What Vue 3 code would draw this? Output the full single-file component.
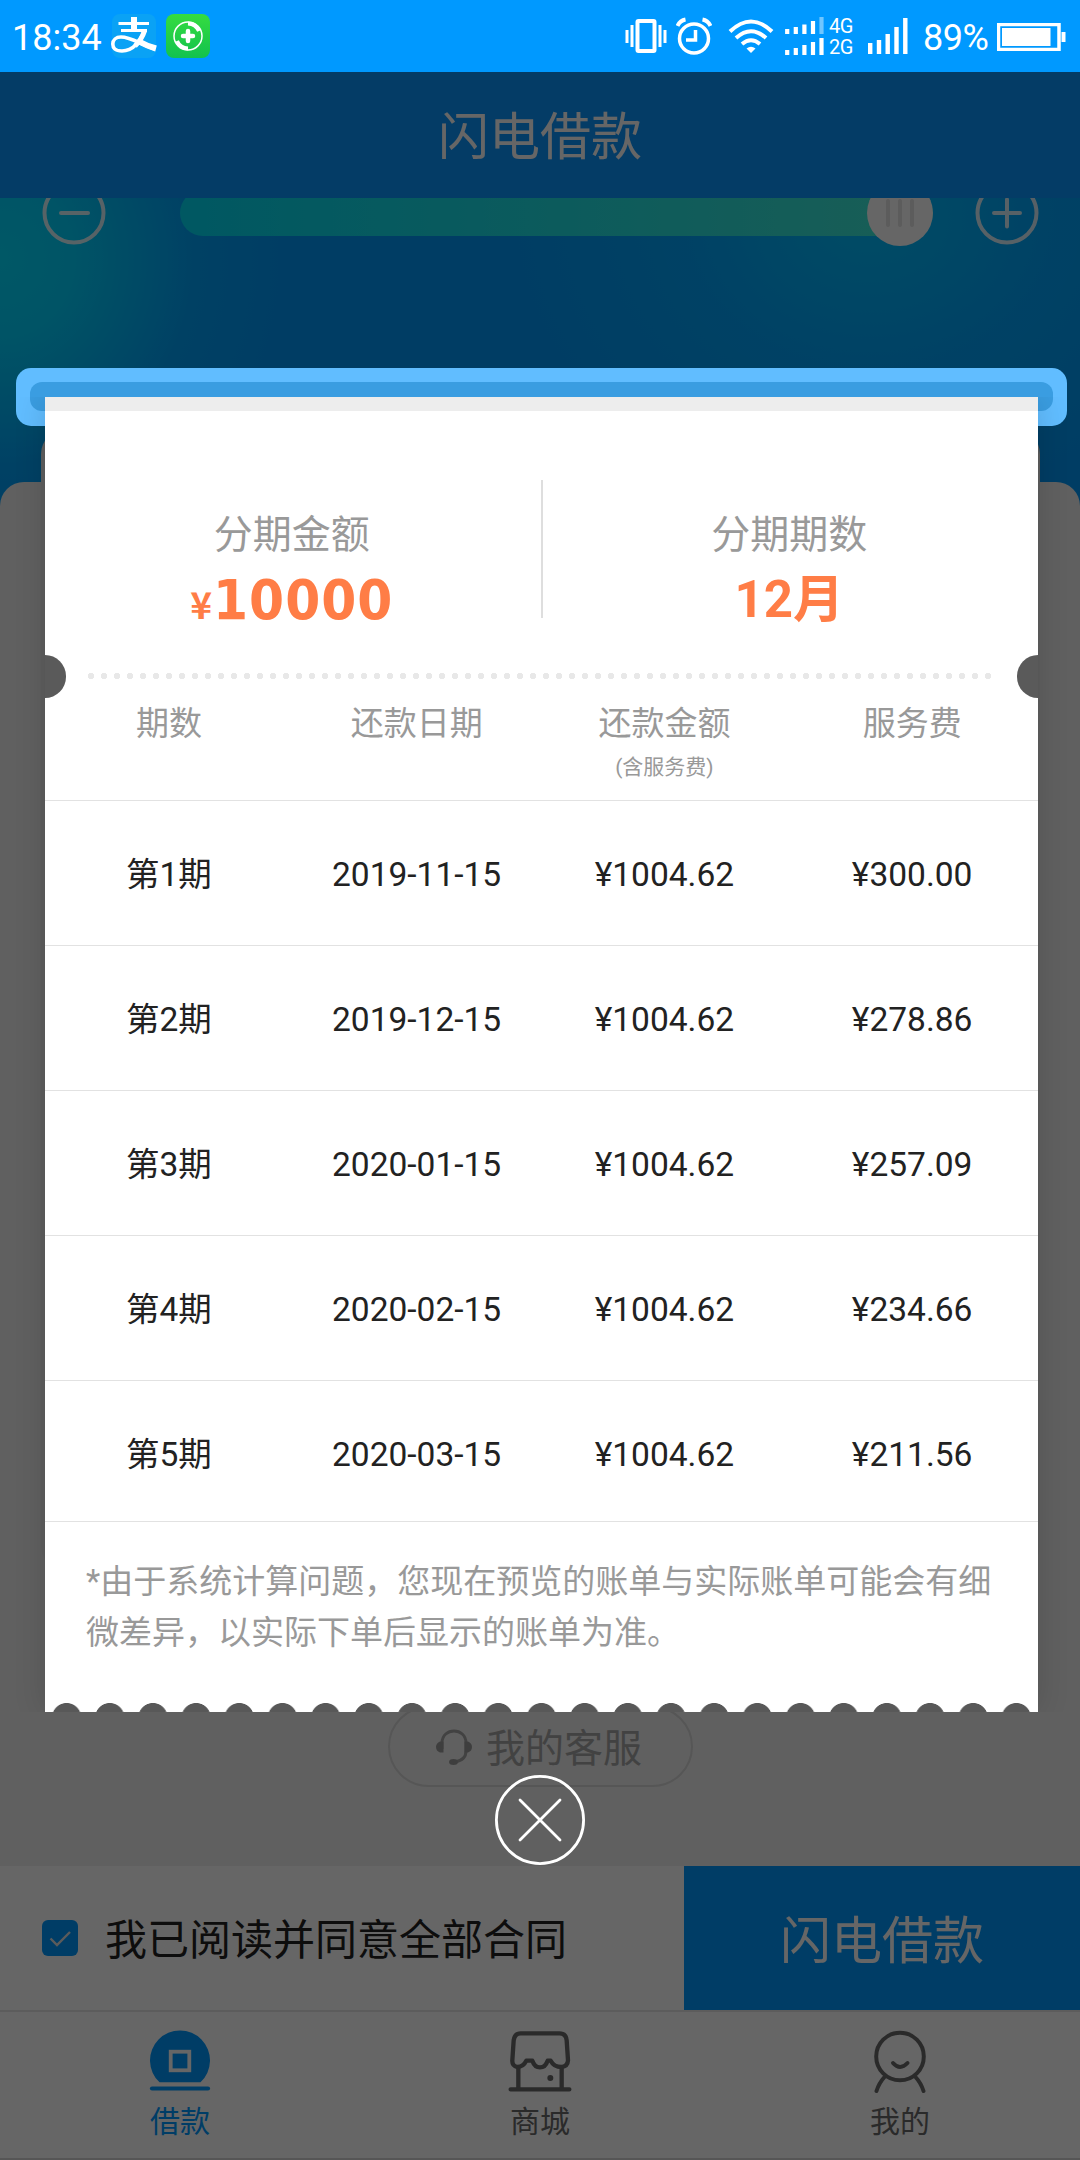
<script setup>
import { ref } from 'vue'

const agreed = ref(true)
const showPlan = ref(true)

const plan = ref([
  { term: 1, date: '2019-11-15', amount: '1004.62', fee: '300.00' },
  { term: 2, date: '2019-12-15', amount: '1004.62', fee: '278.86' },
  { term: 3, date: '2020-01-15', amount: '1004.62', fee: '257.09' },
  { term: 4, date: '2020-02-15', amount: '1004.62', fee: '234.66' },
  { term: 5, date: '2020-03-15', amount: '1004.62', fee: '211.56' }
])
</script>

<template>
  <div class="page">
    <div class="status-bar">
      <span class="time">18:34</span>
      <svg class="alipay" width="46" height="44" viewBox="0 0 46 44">
        <rect x="1" y="0" width="44" height="44" rx="8" fill="#0aa2f5" />
        <g fill="none" stroke="#fff">
          <path d="M7.5 9.5H38M10 16.5H36" stroke-width="3.200" />
          <path d="M23 3V17" stroke-width="6" />
          <path d="M33 17C30 27 22 37 11 37C4 37 1.800 34 1.800 30C1.800 26 5 23 10 23C20 23 29 30 44 35" stroke-width="3.600" />
          <path d="M27 27Q36 32 45 34.500" stroke-width="6" />
          <path d="M33.500 17C31.500 23 28 28 24 32" stroke-width="5" />
        </g>
      </svg>
      <svg class="guard" width="44" height="44" viewBox="0 0 44 44">
        <defs>
          <linearGradient id="guard-bg" x1="0" y1="0" x2="0" y2="1">
            <stop offset="0" stop-color="#35dc40" />
            <stop offset="1" stop-color="#12c24e" />
          </linearGradient>
        </defs>
        <rect width="44" height="44" rx="8" fill="url(#guard-bg)" />
        <g fill="none" stroke="#fff">
          <circle cx="22" cy="22" r="14" stroke-width="1.500" />
          <path d="M22 9.500A12.500 12.500 0 0 1 33 17M11 27A12.500 12.500 0 0 0 22 34.500" stroke-width="4" />
          <path d="M17 22H27M22 17V27" stroke-width="4.500" stroke-linecap="round" />
        </g>
      </svg>
      <div class="status-right">
        <svg width="42" height="36" viewBox="0 0 42 36">
          <g fill="none" stroke="#fff">
            <rect x="12.500" y="3" width="17" height="30" rx="1" stroke-width="4" />
            <path d="M7 7V29M35 7V29" stroke-width="3" />
            <path d="M2 12V25M40 12V25" stroke-width="3" />
          </g>
        </svg>
        <svg class="alarm" width="36" height="38" viewBox="0 0 36 38">
          <g fill="none" stroke="#fff">
            <circle cx="18" cy="21.500" r="14.500" stroke-width="3.500" />
            <path d="M19.500 13V23H10" stroke-width="3.500" />
            <path d="M1.500 9Q4 3.500 9.500 2.500M26.500 2.500Q32 3.500 34.500 9" stroke-width="4" />
          </g>
        </svg>
        <svg class="wifi" width="46" height="36" viewBox="0 0 46 36">
          <g fill="none" stroke="#fff" stroke-width="4">
            <path d="M2 13.500Q23 -6.500 44 13.500" />
            <path d="M8 20Q23 6.500 38 20" />
            <path d="M14 26Q23 18.500 32 26" />
          </g>
          <path d="M18.500 30.500Q23 27 27.500 30.500L23 35Z" fill="#fff" />
        </svg>
        <svg class="dual" width="40" height="40" viewBox="0 0 40 40">
          <path d="M2.200 18V13M10.800 18V11M19.400 18V8.500M28 18V5M2.200 39V34M10.800 39V32M19.400 39V29M28 39V26M36.500 39V22" stroke="#fff" stroke-width="4.200" />
          <path d="M36.500 18V1" stroke="#70c6ff" stroke-width="4.200" />
        </svg>
        <div class="net">
          <span>4G</span>
          <span>2G</span>
        </div>
        <svg class="signal" width="40" height="36" viewBox="0 0 40 36">
          <path d="M2.200 36V25M11 36V22M19.700 36V16M28.500 36V9M37.300 36V0" stroke="#fff" stroke-width="4.400" />
        </svg>
        <span class="percent">89%</span>
        <svg class="battery" width="70" height="28" viewBox="0 0 70 28">
          <rect x="1.500" y="1.500" width="60.500" height="25" fill="none" stroke="#fff" stroke-width="3.500" />
          <rect x="5" y="5" width="48.500" height="18" fill="#fff" />
          <path d="M66.500 9V19" stroke="#fff" stroke-width="4" />
        </svg>
      </div>
    </div>

    <header class="nav-bar">闪电借款</header>

    <main class="content">
      <div class="hero">
        <div class="slider-row">
          <svg width="64" height="64" viewBox="0 0 64 64">
            <circle cx="32" cy="32" r="29.500" />
            <path d="M19 32H46" />
          </svg>
          <div class="track">
            <div class="thumb"><i></i><i></i><i></i></div>
          </div>
          <svg width="64" height="64" viewBox="0 0 64 64">
            <circle cx="32" cy="32" r="29.500" />
            <path d="M19 32H45M32 18.500V45.500" />
          </svg>
        </div>
      </div>
      <div class="sheet">
        <div class="sheet-card"></div>
        <div class="service">
          <svg width="38" height="36" viewBox="0 0 38 36">
            <path d="M7 20V14C7 -2 31 -2 31 14V22Q31 31 20 33" fill="none" stroke="#a5a5a5" stroke-width="3" />
            <path d="M8.500 12.500V23.500H5Q1 22 1 18T5 12.500ZM29.500 12.500V23.500H33Q37 22 37 18T33 12.500Z" fill="#9c9c9c" />
            <ellipse cx="18.500" cy="33" rx="4.500" ry="3" fill="#9c9c9c" />
          </svg>
          <span>我的客服</span>
        </div>
      </div>
    </main>

    <div class="action-bar">
      <label class="agree" @click="agreed = !agreed">
        <span class="checkbox">
          <svg v-if="agreed" width="36" height="36" viewBox="0 0 36 36">
            <path d="M8.500 18.500L15 25L28 12" fill="none" stroke="#e4e4e4" stroke-width="2.400" />
          </svg>
        </span>
        <span class="agree-text">我已阅读并同意全部合同</span>
      </label>
      <button class="submit">闪电借款</button>
    </div>

    <nav class="tab-bar">
      <div class="tab active">
        <svg width="64" height="64" viewBox="0 0 64 64">
          <path d="M11.500 53.300A30 30 0 1 1 52.500 53.300Z" fill="#0099ff" />
          <rect x="22.700" y="22.700" width="18.600" height="18.600" fill="none" stroke="#fff" stroke-width="3.800" />
          <path d="M4 59.500H60" stroke="#0099ff" stroke-width="4.200" stroke-linecap="round" />
        </svg>
        <span>借款</span>
      </div>
      <div class="tab">
        <svg width="64" height="64" viewBox="114 56 192 192">
          <g fill="none" stroke="#6a6a6a" stroke-width="13" stroke-linecap="round" stroke-linejoin="round">
            <path d="M152 69H268Q288 69 290 90L294 150Q293 168 274 170Q252 170 242 151H233Q226 171 210 171T187 151H169Q160 170 142 170Q126 167 127 150L131 90Q134 69 152 69Z" />
            <path d="M145 172V236M275 172V236M122 237H298" />
          </g>
          <circle cx="241" cy="203" r="9" fill="#6a6a6a" />
        </svg>
        <span>商城</span>
      </div>
      <div class="tab">
        <svg width="64" height="64" viewBox="0 0 64 64">
          <g fill="none" stroke="#6a6a6a" stroke-width="4" stroke-linecap="round">
            <circle cx="32" cy="27.500" r="23.800" />
            <path d="M25 34Q32 42 39.500 34" />
            <path d="M16.500 48Q11 54 8.500 62M47.500 48Q53 54 55.500 62" />
          </g>
        </svg>
        <span>我的</span>
      </div>
    </nav>

    <div v-if="showPlan" class="mask">
      <div class="slot">
        <div class="slot-inner"></div>
      </div>
      <section class="ticket">
        <div class="summary">
          <div class="summary-item">
            <span class="label">分期金额</span>
            <span class="money"><small>¥</small>10000</span>
          </div>
          <div class="divider"></div>
          <div class="summary-item">
            <span class="label">分期期数</span>
            <span class="months">12月</span>
          </div>
        </div>

        <div class="tear">
          <span class="notch left"></span>
          <span class="dots"></span>
          <span class="notch right"></span>
        </div>

        <div class="plan-head">
          <div>期数</div>
          <div>还款日期</div>
          <div>还款金额<small>(含服务费)</small></div>
          <div>服务费</div>
        </div>
        <div class="plan-body">
          <div v-for="item in plan" :key="item.term" class="plan-row">
            <span>第{{ item.term }}期</span>
            <span>{{ item.date }}</span>
            <span>¥{{ item.amount }}</span>
            <span>¥{{ item.fee }}</span>
          </div>
        </div>
        <p class="note">*由于系统计算问题，您现在预览的账单与实际账单可能会有细微差异，以实际下单后显示的账单为准。</p>
        <div class="scallops"></div>
      </section>
      <svg class="close" width="92" height="92" viewBox="0 0 92 92" @click="showPlan = false">
        <circle cx="46" cy="46" r="43.600" />
        <path d="M26 26L66 66M66 26L26 66" />
      </svg>
    </div>
  </div>
</template>

<style>
body {
  margin: 0;
}
</style>

<style scoped>
.page {
  position: relative;
  display: flex;
  flex-direction: column;
  width: 1080px;
  height: 2160px;
  overflow: hidden;
  background: #efefef;
  font-family: Roboto, 'Noto Sans CJK SC', sans-serif;
}
svg {
  display: block;
  flex: none;
}

/* 状态栏 */
.status-bar {
  display: flex;
  align-items: center;
  flex: none;
  height: 72px;
  padding: 0 13px 0 12px;
  box-sizing: border-box;
  background: #0099ff;
  color: #fff;
}
.time {
  width: 99px;
  font-size: 36px;
  padding-top: 3px;
}
.guard {
  margin-left: 9px;
}
.status-right {
  display: flex;
  align-items: center;
  margin-left: auto;
}
.alarm {
  margin-left: 9px;
}
.wifi {
  margin-left: 16px;
}
.dual {
  margin-left: 11px;
}
.net {
  display: flex;
  flex-direction: column;
  width: 26px;
  margin-left: 4px;
  padding-top: 2px;
  font-size: 20px;
  line-height: 21px;
  letter-spacing: -0.5px;
}
.signal {
  margin-left: 13px;
}
.percent {
  width: 66px;
  margin-left: 15px;
  padding-top: 4px;
  font-size: 36px;
  letter-spacing: -0.5px;
}
.battery {
  margin-left: 8px;
  margin-top: 2px;
}

.nav-bar {
  flex: none;
  height: 126px;
  padding-top: 3px;
  box-sizing: border-box;
  line-height: 126px;
  text-align: center;
  font-size: 51px;
  color: #fff;
  background: #0c97ff;
}

/* 页面内容 */
.content {
  display: flex;
  flex-direction: column;
  flex: 1;
  overflow: hidden;
}
.hero {
  flex: none;
  height: 320px;
  background:
    radial-gradient(ellipse 290px 310px at 0 60px, #00dcff 0, rgba(0, 220, 255, 0.85) 25%, rgba(0, 190, 255, 0.25) 68%, rgba(0, 153, 250, 0) 100%),
    radial-gradient(ellipse 370px 300px at 870px 20px, rgba(0, 205, 255, 0.7) 0, rgba(0, 185, 255, 0.35) 50%, rgba(0, 153, 250, 0) 100%),
    #0099fa;
}
.slider-row {
  display: flex;
  align-items: center;
  justify-content: space-between;
  height: 64px;
  margin: -17px 41px 0 42px;
}
.slider-row svg {
  fill: none;
  stroke: #fff;
  stroke-width: 4;
  stroke-linecap: round;
  opacity: 0.85;
}
.track {
  display: flex;
  justify-content: flex-end;
  align-items: center;
  width: 753px;
  height: 46px;
  margin-left: 31px;
  border-radius: 23px;
  background: linear-gradient(90deg, #00dcf5, #18e2ea 40%, #40ebd6);
}
.thumb {
  display: flex;
  align-items: center;
  justify-content: center;
  gap: 8px;
  width: 66px;
  height: 66px;
  border-radius: 50%;
  background: #fff;
}
.thumb i {
  width: 4px;
  height: 28px;
  border-radius: 2px;
  background: #e6e6e6;
}
.sheet {
  display: flex;
  flex-direction: column;
  align-items: center;
  flex: 1;
  margin-top: -36px;
  border-radius: 24px 24px 0 0;
  background: #f0f0f0;
}
.sheet-card {
  flex: none;
  width: 999px;
  height: 1140px;
  margin-top: -52px;
  border-radius: 24px;
  background: #ebebeb;
}
.service {
  display: flex;
  align-items: center;
  justify-content: center;
  gap: 13px;
  width: 298px;
  height: 77px;
  margin-top: 136px;
  padding-right: 3px;
  box-sizing: content-box;
  border: 2px solid #d6d6d6;
  border-radius: 41px;
  color: #a5a5a5;
  font-size: 39px;
}
.service span {
  margin-top: -4px;
}

/* 底部操作 */
.action-bar {
  display: flex;
  flex: none;
  height: 144px;
  border-bottom: 2px solid #e6e6e6;
  background: #fff;
}
.agree {
  display: flex;
  align-items: center;
  gap: 27px;
  width: 684px;
  padding-left: 42px;
  box-sizing: border-box;
  font-size: 42px;
  color: #222;
}
.agree-text {
  margin-top: -3px;
}
.checkbox {
  width: 36px;
  height: 36px;
  border-radius: 6px;
  background: #0099ff;
}
.submit {
  flex: 1;
  border: 0;
  padding: 0 0 3px;
  background: #0099ff;
  color: #fff;
  font-family: inherit;
  font-size: 51px;
}
.tab-bar {
  display: flex;
  flex: none;
  height: 148px;
  box-sizing: border-box;
  border-bottom: 2px solid #d8d8d8;
  background: #fff;
}
.tab {
  display: flex;
  flex-direction: column;
  align-items: center;
  flex: 1;
  padding-top: 17px;
  font-size: 30px;
  line-height: 36px;
  color: #6a6a6a;
}
.tab span {
  margin-top: 11px;
}
.tab.active {
  color: #0099ff;
}

/* 还款计划弹层 */
.mask {
  position: absolute;
  inset: 72px 0 0;
  display: flex;
  flex-direction: column;
  align-items: center;
  padding-top: 296px;
  background: rgba(0, 0, 0, 0.6);
}
.slot {
  flex: none;
  width: 1051px;
  height: 58px;
  margin-left: 3px;
  padding: 14px;
  box-sizing: border-box;
  border-radius: 15px;
  background: #61bdff;
}
.slot-inner {
  height: 29px;
  border-radius: 12px;
  background: #3a9de1;
}
.ticket {
  display: flex;
  flex-direction: column;
  flex: none;
  width: 993px;
  height: 1315px;
  margin: -29px 0 0 3px;
  box-sizing: border-box;
  border-top: 14px solid #ededed;
  background: #fff;
  box-shadow: 0 0 30px rgba(0, 0, 0, 0.14);
  clip-path: inset(0 -45px 0 -45px);
}
.summary {
  display: flex;
  flex: none;
  height: 240px;
}
.summary-item {
  display: flex;
  flex-direction: column;
  align-items: center;
  flex: 1;
  padding: 97px 2px 0 0;
}
.label {
  font-size: 39px;
  line-height: 54px;
  color: #999;
}
.money,
.months {
  height: 76px;
  line-height: 76px;
  font-weight: 700;
  color: #ff7d46;
}
.money {
  font-family: 'DejaVu Sans Condensed', 'DejaVu Sans', sans-serif;
  font-stretch: condensed;
  font-size: 56px;
  letter-spacing: 1px;
}
.money small {
  font-family: 'Noto Sans CJK SC', sans-serif;
  font-size: 37px;
  letter-spacing: 1px;
}
.months {
  font-size: 51px;
}
.divider {
  width: 2px;
  height: 138px;
  margin-top: 69px;
  background: #dedede;
}
.tear {
  display: flex;
  align-items: center;
  justify-content: space-between;
  flex: none;
  height: 50px;
}
.notch {
  width: 21px;
  height: 43px;
  background: #5a5a5a;
}
.notch.left {
  border-radius: 0 22px 22px 0;
}
.notch.right {
  border-radius: 22px 0 0 22px;
}
.dots {
  width: 903px;
  height: 6px;
  margin-right: 4px;
  background: radial-gradient(circle at 3px 3px, #e8e8e8 2.9px, transparent 3.5px) 0 0 / 13px 6px;
}
.plan-head {
  display: grid;
  grid-template-columns: repeat(4, 1fr);
  flex: none;
  height: 99px;
  padding: 1px 2px 0 0;
  box-sizing: content-box;
  height: 98px;
  border-bottom: 1px solid #e2e2e2;
  font-size: 33px;
  line-height: 44px;
  text-align: center;
  color: #999;
}
.plan-head small {
  display: block;
  font-size: 21px;
  line-height: 42px;
}
.plan-body {
  flex: none;
  height: 720px;
  overflow: hidden;
  border-bottom: 1px solid #e2e2e2;
}
.plan-row {
  display: grid;
  grid-template-columns: repeat(4, 1fr);
  height: 142px;
  padding: 2px 2px 0 0;
  line-height: 144px;
  border-bottom: 1px solid #e2e2e2;
  text-align: center;
  font-size: 33.5px;
  color: #222;
}
.note {
  flex: 1;
  margin: 0;
  padding: 34px 43px 0 41px;
  font-size: 33px;
  line-height: 51px;
  color: #999;
}
.scallops {
  flex: none;
  height: 9px;
  background: radial-gradient(circle at 50% 14.6px, #585858 14.2px, transparent 14.9px) 0 0 / calc(100% / 23) 9px;
}
.close {
  margin-top: 62px;
  fill: none;
  stroke: #fff;
  stroke-width: 2.8;
  stroke-linecap: round;
}
</style>
